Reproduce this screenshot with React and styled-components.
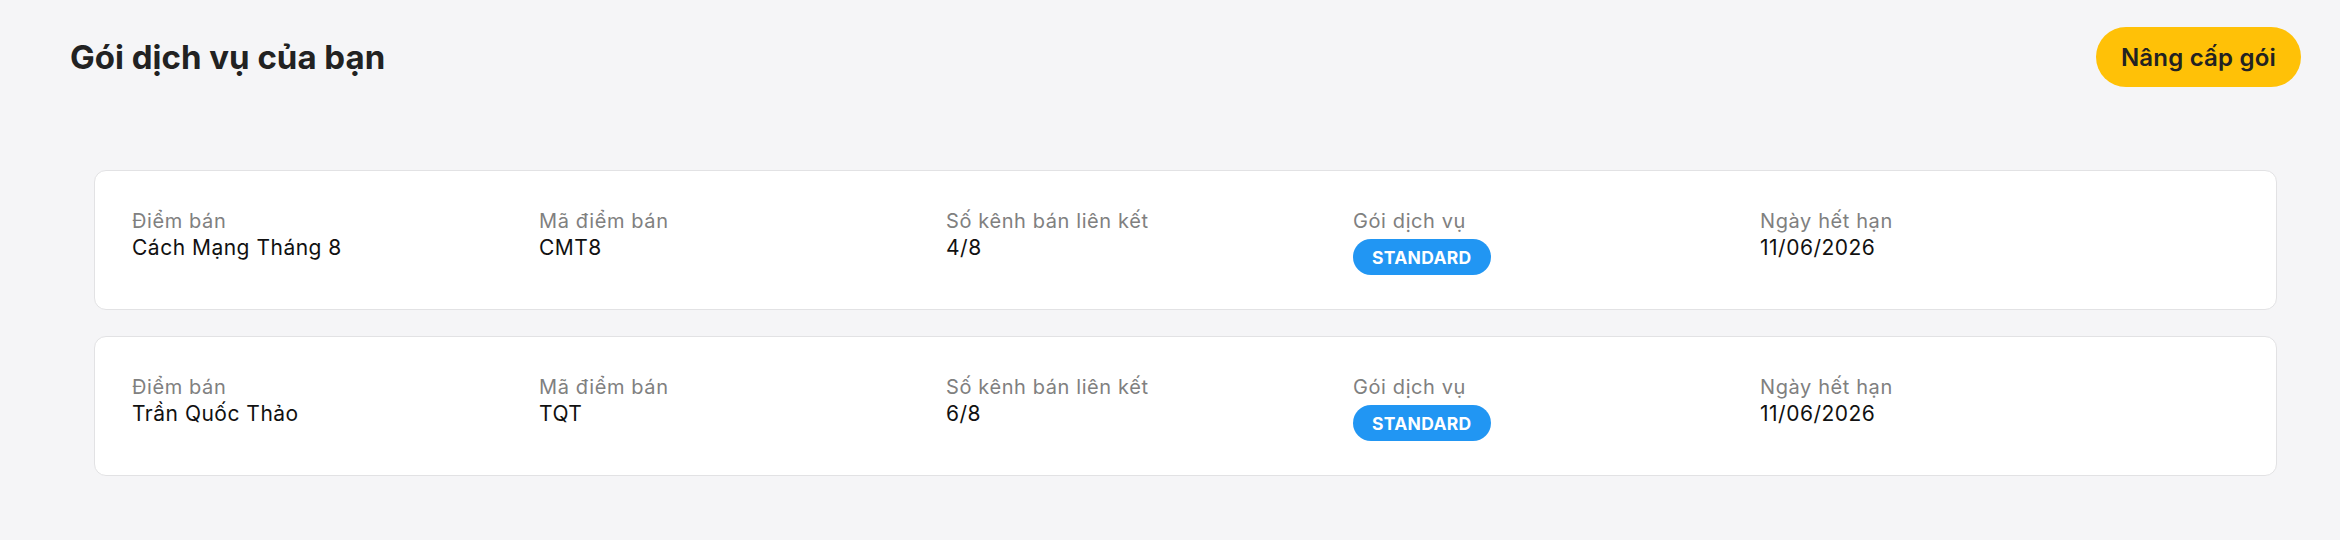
import styled, { createGlobalStyle } from "styled-components";

const GlobalStyle = createGlobalStyle`
  body {
    margin: 0;
    background: #f5f5f7;
    font-family: Inter, "Noto Sans", "Liberation Sans", sans-serif;
  }
`;

const Page = styled.div`
  padding: 0 39px 0 70px;
`;

const Header = styled.div`
  display: flex;
  justify-content: space-between;
  align-items: center;
  padding-top: 27px;
`;

const Title = styled.h1`
  margin: 0;
  font-size: 33px;
  font-weight: 700;
  color: #222222;
`;

const UpgradeButton = styled.button`
  height: 60px;
  padding: 0 25px;
  border: none;
  border-radius: 30px;
  background: #ffc107;
  color: #222222;
  font-family: inherit;
  font-size: 24px;
  font-weight: 600;
  letter-spacing: 0.2px;
  cursor: pointer;
`;

const CardList = styled.div`
  display: flex;
  flex-direction: column;
  gap: 26px;
  margin: 83px 24px 0;
`;

const Card = styled.div`
  display: grid;
  grid-template-columns: repeat(5, 407px);
  align-items: start;
  padding: 37px 37px 34px;
  background: #ffffff;
  border: 1px solid #e2e2e4;
  border-radius: 12px;
`;

const Field = styled.div`
  display: flex;
  flex-direction: column;
  align-items: flex-start;
`;

const Label = styled.span`
  font-size: 20px;
  line-height: 26px;
  letter-spacing: 0.6px;
  color: #808080;
`;

const Value = styled.span`
  font-size: 21px;
  line-height: 28px;
  letter-spacing: 0.5px;
  color: #111111;
`;

const Badge = styled.span`
  margin-top: 5px;
  height: 36px;
  display: inline-flex;
  align-items: center;
  padding: 0 19px;
  border-radius: 18px;
  background: #2196f3;
  color: #ffffff;
  font-size: 17.5px;
  font-weight: 700;
  letter-spacing: 0.3px;
`;

const stores = [
  { name: "Cách Mạng Tháng 8", code: "CMT8", channels: "4/8", plan: "STANDARD", expires: "11/06/2026" },
  { name: "Trần Quốc Thảo", code: "TQT", channels: "6/8", plan: "STANDARD", expires: "11/06/2026" },
];

const App = () => {
  return (
    <Page>
      <GlobalStyle />
      <Header>
        <Title>Gói dịch vụ của bạn</Title>
        <UpgradeButton>Nâng cấp gói</UpgradeButton>
      </Header>
      <CardList>
        {stores.map((s) => (
          <Card key={s.code}>
            <Field>
              <Label>Điểm bán</Label>
              <Value>{s.name}</Value>
            </Field>
            <Field>
              <Label>Mã điểm bán</Label>
              <Value>{s.code}</Value>
            </Field>
            <Field>
              <Label>Số kênh bán liên kết</Label>
              <Value>{s.channels}</Value>
            </Field>
            <Field>
              <Label>Gói dịch vụ</Label>
              <Badge>{s.plan}</Badge>
            </Field>
            <Field>
              <Label>Ngày hết hạn</Label>
              <Value>{s.expires}</Value>
            </Field>
          </Card>
        ))}
      </CardList>
    </Page>
  );
};

export default App;
